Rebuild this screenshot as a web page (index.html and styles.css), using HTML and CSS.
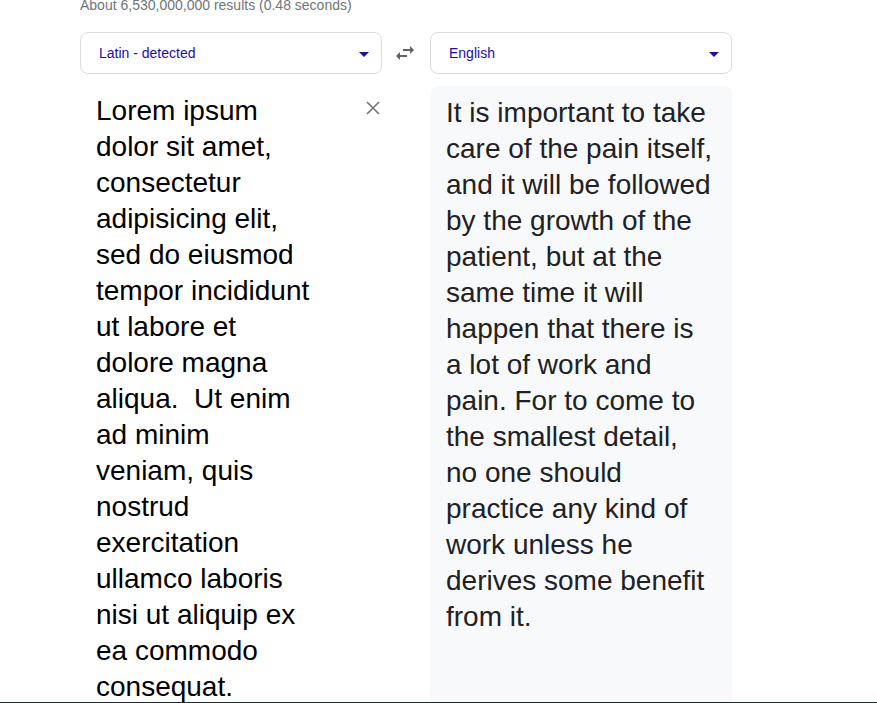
FILE: index.html
```html
<!DOCTYPE html>
<html>
<head>
<meta charset="utf-8">
<link rel="stylesheet" href="styles.css">
</head>
<body>
<div class="page">
  <div class="results">About 6,530,000,000 results (0.48 seconds)</div>
  <div class="translator">
    <div class="select">
      <span class="select-label">Latin - detected</span>
      <span class="caret"></span>
    </div>
    <div class="swap">
      <svg width="24" height="24" viewBox="0 0 24 24"><path fill="#5f6368" d="M6.99 11L3 15l3.99 4v-3H14v-2H6.99v-3zM21 9l-3.99-4v3H10v2h7.01v3L21 9z"/></svg>
    </div>
    <div class="select">
      <span class="select-label">English</span>
      <span class="caret"></span>
    </div>

    <div class="source">
      <div class="source-text">Lorem ipsum<br>dolor sit amet,<br>consectetur<br>adipisicing elit,<br>sed do eiusmod<br>tempor incididunt<br>ut labore et<br>dolore magna<br>aliqua.&nbsp; Ut enim<br>ad minim<br>veniam, quis<br>nostrud<br>exercitation<br>ullamco laboris<br>nisi ut aliquip ex<br>ea commodo<br>consequat.</div>
      <svg class="clear" width="24" height="24" viewBox="0 0 24 24"><path d="M6 6L18 18M18 6L6 18" stroke="#70757a" stroke-width="1.6" fill="none"/></svg>
    </div>
    <div></div>
    <div class="target">It is important to take care of the pain itself, and it will be followed by the growth of the patient, but at the same time it will happen that there is a lot of work and pain. For to come to the smallest detail, no one should practice any kind of work unless he derives some benefit from it.</div>
  </div>
</div>
</body>
</html>
```
FILE: styles.css
```css
html, body {
  margin: 0;
  padding: 0;
  background: #fff;
}
body {
  font-family: "Liberation Sans", Arial, sans-serif;
  overflow: hidden;
}
.page {
  height: 702px;
  overflow: hidden;
  border-bottom: 1px solid #1f2a2a;
  padding-left: 80px;
}
.results {
  margin-top: -5px;
  font-size: 14px;
  line-height: 20px;
  color: #70757a;
}
.translator {
  margin-top: 17px;
  display: grid;
  grid-template-columns: 302px 48px 302px;
  grid-template-rows: 42px auto;
  row-gap: 12px;
}
.select {
  box-sizing: border-box;
  border: 1px solid #dadce0;
  border-radius: 8px;
  display: flex;
  align-items: center;
  justify-content: space-between;
  padding: 0 12px 0 18px;
}
.select-label {
  font-size: 14px;
  color: #1a0dab;
}
.caret {
  width: 0;
  height: 0;
  border-left: 5px solid transparent;
  border-right: 5px solid transparent;
  border-top: 5px solid #1a0dab;
  margin-top: 2px;
}
.swap {
  display: flex;
  align-items: center;
  justify-content: center;
  padding-right: 3px;
}
.source {
  position: relative;
  padding: 7px 0 0 16px;
}
.source-text {
  font-size: 28px;
  line-height: 36px;
  color: #000;
  white-space: nowrap;
}
.clear {
  position: absolute;
  top: 10px;
  right: -3px;
}
.target {
  background: #f8f9fa;
  border-radius: 8px 8px 0 0;
  padding: 9px 18px 0 16px;
  font-size: 28px;
  line-height: 36px;
  color: #202124;
  min-height: 700px;
}
```
